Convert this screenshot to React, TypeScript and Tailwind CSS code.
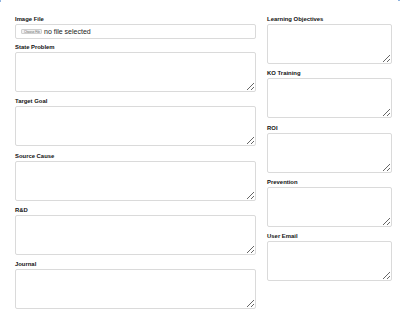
const leftFields = ['State Problem', 'Target Goal', 'Source Cause', 'R&D', 'Journal'];
const rightFields = ['Learning Objectives', 'KO Training', 'ROI', 'Prevention', 'User Email'];

function Field({ label }: { label: string }) {
  return (
    <div className="flex flex-col">
      <label className="mb-[1px] pt-[2px] text-[5.9px] font-bold leading-[8px] text-[#111]">{label}</label>
      <textarea className="h-[40px] w-full rounded-[2px] border border-[#dadada] bg-white" />
    </div>
  );
}

export default function App() {
  return (
    <div
      className="relative h-[324px] w-[400px] bg-white pl-[15px] pr-[8px] pt-[13px]"
      style={{ fontFamily: '"Liberation Sans", Arial, sans-serif' }}
    >
      <span className="absolute left-0 top-0 h-[2px] w-[1px] bg-[#8fb4e0]" />
      <span className="absolute right-0 top-0 h-[1px] w-[2px] bg-[#8fb4e0]" />
      <div className="flex gap-[11.5px]">
        <div className="flex w-[240.6px] flex-col gap-[3.25px]">
          <div className="mb-[-1.25px] flex flex-col">
            <label className="mb-[1px] pt-[2px] text-[5.9px] font-bold leading-[8px] text-[#111]">Image File</label>
            <div className="flex h-[15px] items-center rounded-[2px] border border-[#dadada] pl-[5px]">
              <span className="flex h-[5px] w-[21px] items-center justify-center overflow-hidden rounded-[1px] border border-[#cfcfcf] bg-[#f0f0f0]">
                <span className="inline-block scale-[0.5] whitespace-nowrap text-[6px] leading-none text-[#666]">
                  Choose File
                </span>
              </span>
              <span className="ml-[2px] text-[7px] leading-none text-[#222]">no file selected</span>
            </div>
          </div>
          {leftFields.map((f) => (
            <Field key={f} label={f} />
          ))}
        </div>
        <div className="flex w-[124.6px] flex-col gap-[3.25px]">
          {rightFields.map((f) => (
            <Field key={f} label={f} />
          ))}
        </div>
      </div>
    </div>
  );
}
